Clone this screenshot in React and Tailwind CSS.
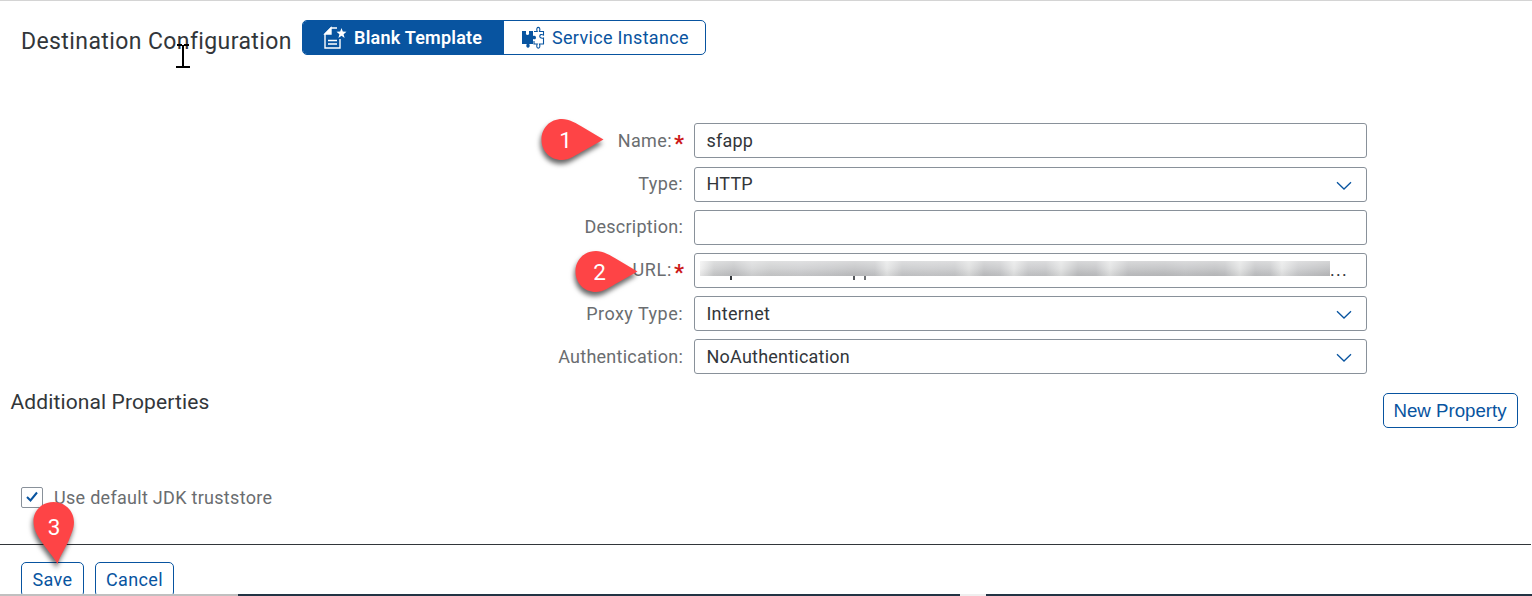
const font = "font-['Roboto','Liberation_Sans',sans-serif]";

const sidePin = "M21 0C28 0 35 4 44 9.500L62.500 20.500L44 31C35 36 28 41 21 41C9 41 0.500 32 0.500 20.500C0.500 9 9 0 21 0Z";
const downPin = "M20.500 0C9 0 0.500 8.500 0.500 19.500C0.500 27 4 33 8 39C14 48 20 54 24.500 62C27 54 33 45 36 38C38 32 41 27 41 20C41 9 32 0 20.500 0Z";

function Pin({ n, className, d, x, y }) {
  return (
    <svg className={`absolute overflow-visible ${className}`} width="64" height="64" viewBox="0 0 64 64">
      <path className="drop-shadow-[-1px_4px_2.5px_rgba(0,0,0,0.6)]" d={d} fill="#fe4446" />
      <text x={x} y={y} textAnchor="middle" fontSize="22.500" fill="#fff" fontFamily="Roboto, sans-serif">{n}</text>
    </svg>
  );
}

function Chevron() {
  return (
    <svg className="mt-[3px] mr-[14px] shrink-0" width="16" height="10" viewBox="0 0 16 10" fill="none" stroke="#0854a0" strokeWidth="1.300">
      <path d="M1 1.300L8 8L15 1.300" />
    </svg>
  );
}

function Field({ label, labelClass = "tracking-[0.26px]", required, value, select, children }) {
  return (
    <div className="flex h-[35px] items-center">
      <div className="flex w-[683px] items-center justify-end text-[18px] leading-5 text-[#6a6d70]">
        <span className={`whitespace-nowrap ${labelClass}`}>{label}:</span>
        {required && <span className="mt-[4px] -mb-[2px] ml-[2px] w-[9px] text-[22px] leading-5 font-bold text-[#cc1919]">*</span>}
      </div>
      <div className="ml-[11px] flex h-[35px] w-[673px] items-center rounded-[3px] border border-[#89919a] bg-white pl-[11.5px] text-[18px] leading-5 tracking-[0.22px] text-[#32363a]">
        {children || <span className="flex-1 whitespace-nowrap">{value}</span>}
        {select && <Chevron />}
      </div>
    </div>
  );
}

function MaskedUrl() {
  return (
    <div className="-ml-[6.5px] flex items-end">
      <div className="relative h-[19px] w-[630px]">
        <div className="h-[15px] bg-[linear-gradient(90deg,#f0f0f0_0px,#c9cacb_14px,#bebfc1_34px,#d3d4d5_52px,#c9cacb_70px,#cbccce_100px,#c5c6c8_130px,#bebfc1_155px,#c4c5c7_175px,#e3e4e4_187px,#c6c7c9_202px,#c8c9cb_230px,#c6c7c9_255px,#dcdddd_269px,#bfc0c2_284px,#c4c5c7_300px,#e2e3e3_314px,#c5c6c8_328px,#c4c5c7_346px,#dfe0e0_361px,#bdbec0_378px,#c0c1c3_396px,#e0e1e1_410px,#bfc0c2_428px,#bcbdbf_465px,#c2c3c5_485px,#bcbdbf_515px,#c0c1c3_525px,#e0e1e1_540px,#c0c1c3_555px,#c3c4c6_570px,#e4e5e5_582px,#c8c9cb_598px,#b9babc_630px)]">
          <div className="h-full bg-gradient-to-b from-white/40 via-white/15 to-black/[0.04]" />
        </div>
        <i className="absolute top-[15px] left-[30px] h-1 w-[1.500px] bg-[#32363a]" />
        <i className="absolute top-[15px] left-[153px] h-1 w-[1.500px] bg-[#55585c]" />
        <i className="absolute top-[15px] left-[164px] h-1 w-[1.500px] bg-[#707376]" />
      </div>
      <span className="tracking-[1.2px]">...</span>
    </div>
  );
}

export default function App() {
  return (
    <div className={`relative flex h-[596px] w-[1532px] flex-col overflow-hidden border-t border-[#d4d4d4] bg-white ${font}`}>
      <header className="flex h-[122.4px] items-start pt-[19px] pl-[21px]">
        <h1 className="w-[281px] pt-[8px] text-[23px] leading-7 tracking-[0.4px] whitespace-nowrap text-[#32363a]">Destination Configuration</h1>
        <div className="flex h-[35px] w-[404px] overflow-hidden rounded-[5px] border border-[#0854a0] text-[18px]">
          <button className="flex w-[201px] items-center bg-[#0854a0] pl-[20px] text-white">
            <svg width="24" height="24" viewBox="0 0 24 24" fill="none" stroke="currentColor" strokeWidth="1.400">
              <path d="M14 2H8L2 8V22H17V13" />
              <path d="M2 8L8 2V8Z" fill="currentColor" />
              <path d="M5 14.500H14M5 18H14" />
              <path d="M18.500 2L19.800 5.600L23.500 5.800L20.600 8.200L21.600 12L18.500 9.800L15.400 12L16.400 8.200L13.500 5.800L17.200 5.600Z" fill="currentColor" stroke="none" />
            </svg>
            <span className="ml-[7px] font-semibold tracking-[0.22px] whitespace-nowrap">Blank Template</span>
          </button>
          <button className="flex flex-1 items-center pl-[17px] text-[#0854a0]">
            <svg width="24" height="24" viewBox="0 0 24 24" fill="none" stroke="currentColor" strokeWidth="1.100">
              <path d="M1 5H5V7C4 9.500 9 9.500 8 7V5H12V10C16 8 16 15 12 13V18H8.300C10.500 23 3.500 23 5.700 18H1Z" fill="currentColor" stroke="none" />
              <path d="M13 5.500H16.200C14 0 20.500 0 18.500 5.500H22.500V9C17.500 6.500 17.500 13.500 22.500 12V18H18.500C20.500 23.500 14 23.500 16.200 18H13V15" />
            </svg>
            <span className="ml-[7px] tracking-[0.32px] whitespace-nowrap">Service Instance</span>
          </button>
        </div>
      </header>

      <main className="flex flex-col gap-[8.2px]">
        <Field label="Name" labelClass="tracking-[0.4px]" required value="sfapp" />
        <Field label="Type" labelClass="tracking-[0.4px]" value="HTTP" select />
        <Field label="Description" />
        <Field label="URL" labelClass="tracking-[0.7px]" required><MaskedUrl /></Field>
        <Field label="Proxy Type" labelClass="tracking-[0.48px]" value="Internet" select />
        <Field label="Authentication" labelClass="tracking-[0.24px]" value="NoAuthentication" select />
      </main>

      <section className="flex h-[112px] items-start justify-between pt-[13.6px] pr-[14px] pl-[10.5px]">
        <h2 className="text-[21px] leading-7 tracking-[0.12px] whitespace-nowrap text-[#32363a]">Additional Properties</h2>
        <button className="mt-[5px] h-[35px] w-[135px] rounded-[5px] border border-[#0854a0] pt-px pr-px font-['Liberation_Sans',sans-serif] text-[18.7px] whitespace-nowrap text-[#0854a0]">New Property</button>
      </section>

      <label className="flex h-[22px] items-center pl-[21px] text-[18px] text-[#6a6d70]">
        <span className="flex h-[21px] w-[22px] items-center justify-center rounded-[2px] border border-[#89919a]">
          <svg width="12" height="12" viewBox="0 0 12 12" fill="none" stroke="#0854a0" strokeWidth="2"><path d="M1 6L4.500 9.500L11 1.500" /></svg>
        </span>
        <span className="ml-[11px] pt-px tracking-[0.29px] whitespace-nowrap">Use default JDK truststore</span>
      </label>

      <footer className="mt-[35.4px] mr-px flex h-[50px] shrink-0 gap-[11px] overflow-hidden border-t border-[#32363a] pt-[17px] pl-[21px] text-[18px] tracking-[0.36px] text-[#0854a0]">
        <button className="h-[35px] w-[63px] rounded-[5px] border border-[#0854a0]">Save</button>
        <button className="h-[35px] w-[79px] rounded-[5px] border border-[#0854a0]">Cancel</button>
      </footer>
      <div className="flex h-[2px] w-full shrink-0">
        <i className="w-[238px] bg-[#c0c0c0]" />
        <i className="w-[722px] bg-[#223344]" />
        <i className="w-[26px] bg-[#efefef]" />
        <i className="flex-1 bg-[#223344]" />
      </div>

      <Pin n="1" d={sidePin} x="24.500" y="29" className="top-[118px] left-[541px]" />
      <Pin n="2" d={sidePin} x="24.500" y="29" className="top-[250px] left-[575px]" />
      <Pin n="3" d={downPin} x="21" y="33" className="top-[501px] left-[33px]" />
      <svg className="absolute top-[42px] left-[176px]" width="14" height="26" viewBox="0 0 14 26" fill="none" stroke="#000" strokeWidth="2">
        <path d="M1 2H6M8 2H13M7 2V24M0 24H14" />
      </svg>
    </div>
  );
}
